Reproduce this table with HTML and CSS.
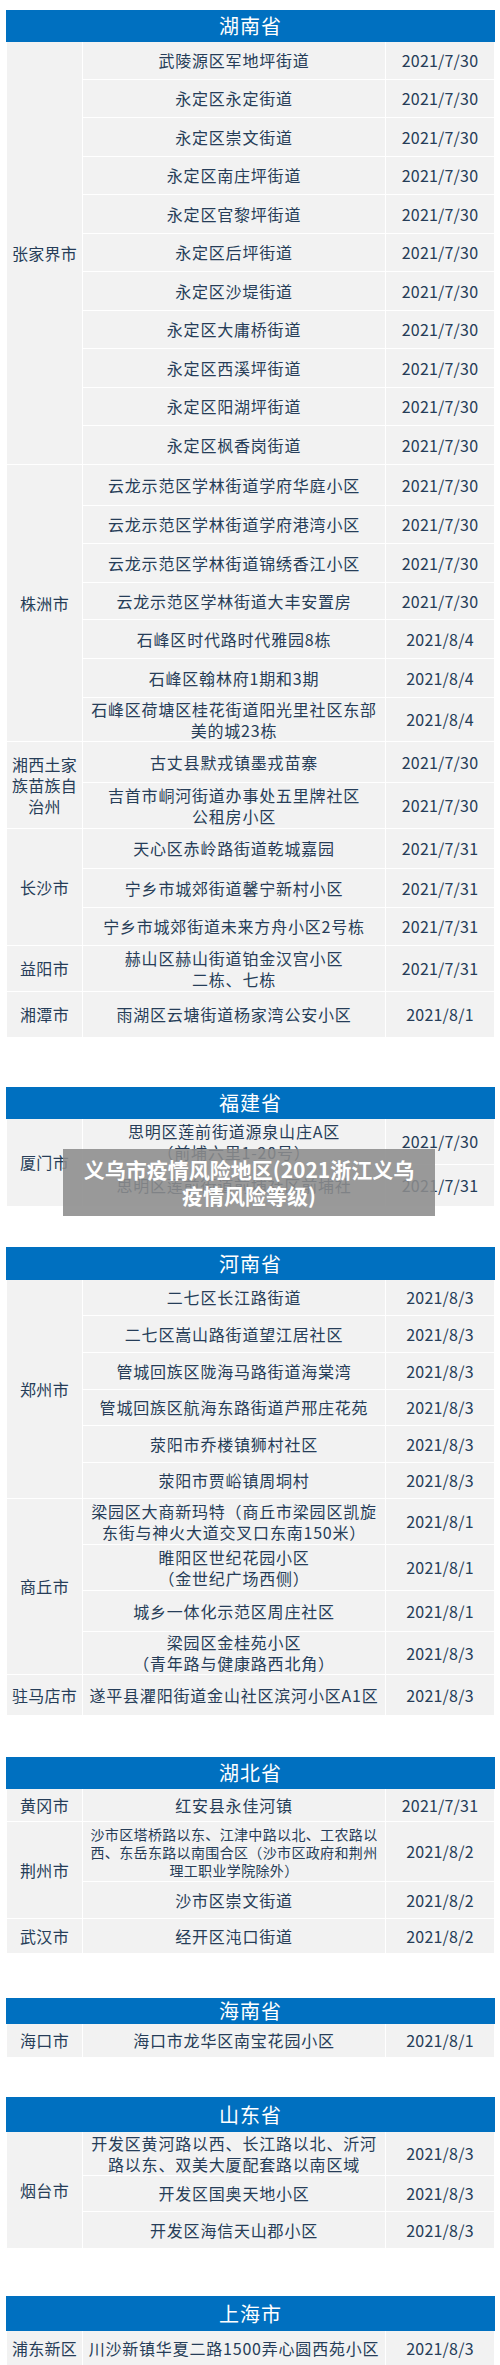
FILE: index.html
```html
<!DOCTYPE html>
<html lang="zh-CN">
<head>
<meta charset="utf-8">
<title>义乌市疫情风险地区</title>
<link rel="stylesheet" href="styles.css">
</head>
<body>
<div class="page">

<table class="risk">
  <colgroup><col class="c-city"><col class="c-place"><col class="c-date"></colgroup>
  <tr class="head h31"><th colspan="3">湖南省</th></tr>
  <tr class="h38"><td class="city" rowspan="11">张家界市</td><td class="place">武陵源区军地坪街道</td><td class="date">2021/7/30</td></tr>
  <tr class="h38"><td class="place">永定区永定街道</td><td class="date">2021/7/30</td></tr>
  <tr class="h39"><td class="place">永定区崇文街道</td><td class="date">2021/7/30</td></tr>
  <tr class="h38"><td class="place">永定区南庄坪街道</td><td class="date">2021/7/30</td></tr>
  <tr class="h39"><td class="place">永定区官黎坪街道</td><td class="date">2021/7/30</td></tr>
  <tr class="h38"><td class="place">永定区后坪街道</td><td class="date">2021/7/30</td></tr>
  <tr class="h39"><td class="place">永定区沙堤街道</td><td class="date">2021/7/30</td></tr>
  <tr class="h38"><td class="place">永定区大庸桥街道</td><td class="date">2021/7/30</td></tr>
  <tr class="h39"><td class="place">永定区西溪坪街道</td><td class="date">2021/7/30</td></tr>
  <tr class="h38"><td class="place">永定区阳湖坪街道</td><td class="date">2021/7/30</td></tr>
  <tr class="h39"><td class="place">永定区枫香岗街道</td><td class="date">2021/7/30</td></tr>
  <tr class="h41"><td class="city" rowspan="7">株洲市</td><td class="place">云龙示范区学林街道学府华庭小区</td><td class="date">2021/7/30</td></tr>
  <tr class="h38"><td class="place">云龙示范区学林街道学府港湾小区</td><td class="date">2021/7/30</td></tr>
  <tr class="h39"><td class="place">云龙示范区学林街道锦绣香江小区</td><td class="date">2021/7/30</td></tr>
  <tr class="h37"><td class="place">云龙示范区学林街道大丰安置房</td><td class="date">2021/7/30</td></tr>
  <tr class="h39"><td class="place">石峰区时代路时代雅园8栋</td><td class="date">2021/8/4</td></tr>
  <tr class="h39"><td class="place">石峰区翰林府1期和3期</td><td class="date">2021/8/4</td></tr>
  <tr class="h44"><td class="place">石峰区荷塘区桂花街道阳光里社区东部<br>美的城23栋</td><td class="date">2021/8/4</td></tr>
  <tr class="h41"><td class="city" rowspan="2">湘西土家<br>族苗族自<br>治州</td><td class="place">古丈县默戎镇墨戎苗寨</td><td class="date">2021/7/30</td></tr>
  <tr class="h46"><td class="place">吉首市峒河街道办事处五里牌社区<br>公租房小区</td><td class="date">2021/7/30</td></tr>
  <tr class="h40"><td class="city" rowspan="3">长沙市</td><td class="place">天心区赤岭路街道乾城嘉园</td><td class="date">2021/7/31</td></tr>
  <tr class="h39"><td class="place">宁乡市城郊街道馨宁新村小区</td><td class="date">2021/7/31</td></tr>
  <tr class="h38"><td class="place">宁乡市城郊街道未来方舟小区2号栋</td><td class="date">2021/7/31</td></tr>
  <tr class="h46"><td class="city">益阳市</td><td class="place">赫山区赫山街道铂金汉宫小区<br>二栋、七栋</td><td class="date">2021/7/31</td></tr>
  <tr class="h46"><td class="city">湘潭市</td><td class="place">雨湖区云塘街道杨家湾公安小区</td><td class="date">2021/8/1</td></tr>
</table>

<table class="risk gap49">
  <colgroup><col class="c-city"><col class="c-place"><col class="c-date"></colgroup>
  <tr class="head h31"><th colspan="3">福建省</th></tr>
  <tr class="h46"><td class="city" rowspan="2">厦门市</td><td class="place">思明区莲前街道源泉山庄A区<br>（前埔六里1-20号）</td><td class="date">2021/7/30</td></tr>
  <tr class="h42"><td class="place">思明区莲前街道前埔社区前埔社</td><td class="date">2021/7/31</td></tr>
</table>

<table class="risk gap40">
  <colgroup><col class="c-city"><col class="c-place"><col class="c-date"></colgroup>
  <tr class="head h32"><th colspan="3">河南省</th></tr>
  <tr class="h36"><td class="city" rowspan="6">郑州市</td><td class="place">二七区长江路街道</td><td class="date">2021/8/3</td></tr>
  <tr class="h37"><td class="place">二七区嵩山路街道望江居社区</td><td class="date">2021/8/3</td></tr>
  <tr class="h37"><td class="place">管城回族区陇海马路街道海棠湾</td><td class="date">2021/8/3</td></tr>
  <tr class="h36"><td class="place">管城回族区航海东路街道芦邢庄花苑</td><td class="date">2021/8/3</td></tr>
  <tr class="h37"><td class="place">荥阳市乔楼镇狮村社区</td><td class="date">2021/8/3</td></tr>
  <tr class="h36"><td class="place">荥阳市贾峪镇周垌村</td><td class="date">2021/8/3</td></tr>
  <tr class="h46"><td class="city" rowspan="4">商丘市</td><td class="place">梁园区大商新玛特（商丘市梁园区凯旋<br>东街与神火大道交叉口东南150米）</td><td class="date">2021/8/1</td></tr>
  <tr class="h46"><td class="place">睢阳区世纪花园小区<br>（金世纪广场西侧）</td><td class="date">2021/8/1</td></tr>
  <tr class="h41"><td class="place">城乡一体化示范区周庄社区</td><td class="date">2021/8/1</td></tr>
  <tr class="h41"><td class="place">梁园区金桂苑小区<br>（青年路与健康路西北角）</td><td class="date">2021/8/3</td></tr>
  <tr class="h41"><td class="city">驻马店市</td><td class="place">遂平县灈阳街道金山社区滨河小区A1区</td><td class="date">2021/8/3</td></tr>
</table>

<table class="risk gap41">
  <colgroup><col class="c-city"><col class="c-place"><col class="c-date"></colgroup>
  <tr class="head h31"><th colspan="3">湖北省</th></tr>
  <tr class="h33"><td class="city">黄冈市</td><td class="place">红安县永佳河镇</td><td class="date">2021/7/31</td></tr>
  <tr class="h60"><td class="city" rowspan="2">荆州市</td><td class="place small">沙市区塔桥路以东、江津中路以北、工农路以<br>西、东岳东路以南围合区（沙市区政府和荆州<br>理工职业学院除外）</td><td class="date">2021/8/2</td></tr>
  <tr class="h37"><td class="place">沙市区崇文街道</td><td class="date">2021/8/2</td></tr>
  <tr class="h35"><td class="city">武汉市</td><td class="place">经开区沌口街道</td><td class="date">2021/8/2</td></tr>
</table>

<table class="risk gap44">
  <colgroup><col class="c-city"><col class="c-place"><col class="c-date"></colgroup>
  <tr class="head h25"><th colspan="3">海南省</th></tr>
  <tr class="h34"><td class="city">海口市</td><td class="place">海口市龙华区南宝花园小区</td><td class="date">2021/8/1</td></tr>
</table>

<table class="risk gap39">
  <colgroup><col class="c-city"><col class="c-place"><col class="c-date"></colgroup>
  <tr class="head h34"><th colspan="3">山东省</th></tr>
  <tr class="h44"><td class="city" rowspan="3">烟台市</td><td class="place">开发区黄河路以西、长江路以北、沂河<br>路以东、双美大厦配套路以南区域</td><td class="date">2021/8/3</td></tr>
  <tr class="h36"><td class="place">开发区国奥天地小区</td><td class="date">2021/8/3</td></tr>
  <tr class="h37"><td class="place">开发区海信天山郡小区</td><td class="date">2021/8/3</td></tr>
</table>

<table class="risk gap47">
  <colgroup><col class="c-city"><col class="c-place"><col class="c-date"></colgroup>
  <tr class="head h34"><th colspan="3">上海市</th></tr>
  <tr class="h36"><td class="city">浦东新区</td><td class="place">川沙新镇华夏二路1500弄心圆西苑小区</td><td class="date">2021/8/3</td></tr>
</table>

<div class="caption">义乌市疫情风险地区(2021浙江义乌<br>疫情风险等级)</div>
</div>
</body>
</html>
```

FILE: styles.css
```css
html, body {
  margin: 0;
  padding: 0;
  background: #ffffff;
}

body {
  font-family: "Noto Sans CJK SC", "Noto Sans", sans-serif;
  color: #263d58;
}

.page {
  position: relative;
  padding: 10px 0 0 6px;
  width: 500px;
  box-sizing: border-box;
}

.risk {
  width: 488px;
  border-collapse: collapse;
  table-layout: fixed;
  background: #f2f2f2;
}

.c-city { width: 76px; }
.c-place { width: 303px; }
.c-date { width: 109px; }

.risk th,
.risk td {
  padding: 0;
  border: 1px solid #ffffff;
  text-align: center;
  vertical-align: middle;
}

.head th {
  background: #0070c0;
  color: #ffffff;
  font-weight: normal;
  font-size: 20px;
  letter-spacing: 1px;
  line-height: 24px;
  border-color: #0070c0;
}

.city {
  font-size: 16px;
  letter-spacing: 0.3px;
  line-height: 21px;
}

.place {
  font-size: 16px;
  letter-spacing: 0.8px;
  line-height: 21px;
}

.place.small {
  font-size: 14px;
  letter-spacing: 0.35px;
  line-height: 18px;
}

.date {
  font-size: 16px;
  letter-spacing: 0.2px;
  line-height: 21px;
}

.gap39 { margin-top: 39px; }
.gap40 { margin-top: 40px; }
.gap41 { margin-top: 41px; }
.gap44 { margin-top: 44px; }
.gap47 { margin-top: 47px; }
.gap49 { margin-top: 49px; }

.h25 { height: 25px; }
.h31 { height: 31px; }
.h32 { height: 32px; }
.h33 { height: 33px; }
.h34 { height: 34px; }
.h35 { height: 35px; }
.h36 { height: 36px; }
.h37 { height: 37px; }
.h38 { height: 38px; }
.h39 { height: 39px; }
.h40 { height: 40px; }
.h41 { height: 41px; }
.h42 { height: 42px; }
.h44 { height: 44px; }
.h46 { height: 46px; }
.h60 { height: 60px; }

.caption {
  position: absolute;
  left: 63px;
  top: 1149px;
  width: 372px;
  height: 67px;
  box-sizing: border-box;
  padding-top: 7px;
  background: rgba(140, 140, 140, 0.88);
  color: #ffffff;
  font-weight: bold;
  font-size: 21px;
  line-height: 26px;
  text-align: center;
}
```
